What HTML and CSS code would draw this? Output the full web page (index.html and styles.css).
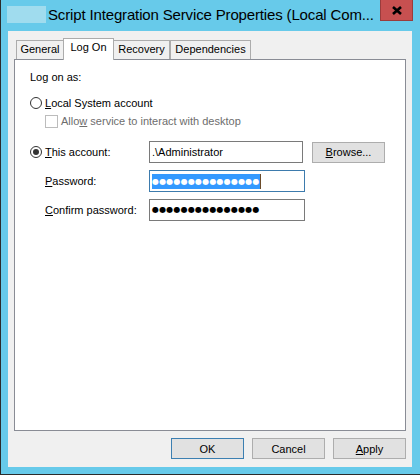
FILE: index.html
```html
<!DOCTYPE html>
<html lang="en">
<head>
    <meta charset="UTF-8">
    <title>Script Integration Service Properties</title>
    <link rel="stylesheet" href="styles.css">
</head>
<body>
    <div class="window">
        <!-- Title bar -->
        <div class="titlebar">
            <span class="app-icon"></span>
            <span class="title">Script Integration Service Properties (Local Com...</span>
            <span class="close">
                <svg width="10" height="9" viewBox="0 0 10 9">
                    <path d="M1 1 L9 8 M9 1 L1 8" stroke="#000" stroke-width="2.6" fill="none"/>
                </svg>
            </span>
        </div>

        <div class="client">
            <!-- Tabs -->
            <div class="tabs">
                <div class="tab general">General</div>
                <div class="tab active">Log On</div>
                <div class="tab recovery">Recovery</div>
                <div class="tab dependencies">Dependencies</div>
            </div>

            <!-- Log On page -->
            <div class="panel">
                <div class="logon-label">Log on as:</div>

                <div class="radio-row">
                    <span class="radio"></span>
                    <span><u>L</u>ocal System account</span>
                </div>

                <div class="check-row">
                    <span class="checkbox"></span>
                    <span>Allo<u>w</u> service to interact with desktop</span>
                </div>

                <div class="account-grid">
                    <div class="radio-row">
                        <span class="radio checked"></span>
                        <span><u>T</u>his account:</span>
                    </div>
                    <div class="field short">.\Administrator</div>
                    <button class="btn">
                        <u>B</u>rowse...
                    </button>

                    <div class="field-label"><u>P</u>assword:</div>
                    <div class="field focused">
                        <span class="selected">&#9679;&#9679;&#9679;&#9679;&#9679;&#9679;&#9679;&#9679;&#9679;&#9679;&#9679;&#9679;&#9679;&#9679;&#9679;</span><span class="caret"></span>
                    </div>
                    <div></div>

                    <div class="field-label"><u>C</u>onfirm password:</div>
                    <div class="field dots">&#9679;&#9679;&#9679;&#9679;&#9679;&#9679;&#9679;&#9679;&#9679;&#9679;&#9679;&#9679;&#9679;&#9679;&#9679;</div>
                    <div></div>
                </div>
            </div>

            <!-- Dialog buttons -->
            <div class="buttons">
                <button class="btn default">OK</button>
                <button class="btn">Cancel</button>
                <button class="btn"><u>A</u>pply</button>
            </div>
        </div>
    </div>
</body>
</html>
```

FILE: styles.css
```css
* {
    box-sizing: border-box;
}
body {
    margin: 0;
    font-family: "Liberation Sans", Arial, sans-serif;
    font-size: 11px;
    color: #000;
}
.window {
    width: 420px;
    height: 475px;
    display: flex;
    flex-direction: column;
    background: #67CAEA;
    border-left: 1px solid #2b2b2b;
    border-bottom: 1px solid #2b2b2b;
}
.titlebar {
    height: 31px;
    display: flex;
    align-items: flex-start;
    flex-shrink: 0;
}
.app-icon {
    width: 39px;
    height: 17px;
    margin: 6px 0 0 6px;
    background: #A0DCEE;
}
.title {
    margin: 6px 0 0 2px;
    font-size: 15px;
    line-height: 18px;
    letter-spacing: -0.15px;
    color: #000;
    white-space: nowrap;
}
.close {
    margin-left: auto;
    margin-right: 7px;
    width: 33px;
    height: 21px;
    background: #C75050;
    border: 1px solid #9a3c3c;
    border-top: none;
    display: flex;
    align-items: center;
    justify-content: center;
}
.client {
    flex: 1;
    margin: 0 8px 7px 7px;
    padding: 0 6px;
    background: #F0F0F0;
    display: flex;
    flex-direction: column;
}
.tabs {
    display: flex;
    align-items: flex-end;
    margin-top: 7px;
    padding-left: 2px;
    height: 21px;
}
.tab {
    height: 19px;
    line-height: 17px;
    text-align: center;
    border: 1px solid #ACACAC;
    border-bottom: none;
    background: #F0F0F0;
}
.tab.general {
    width: 48px;
}
.tab.recovery {
    width: 57px;
    margin-left: -1px;
}
.tab.dependencies {
    width: 81px;
}
.tab.active {
    position: relative;
    z-index: 1;
    width: 51px;
    height: 22px;
    line-height: 17px;
    margin: 0 0 -1px -1px;
    background: #fff;
}
.panel {
    flex: 1;
    background: #fff;
    border: 1px solid #898C95;
    padding: 10px 15px 0 15px;
}
.logon-label {
    line-height: 14px;
}
.radio-row {
    display: flex;
    align-items: center;
    height: 14px;
    line-height: 14px;
}
.panel > .radio-row {
    margin-top: 12px;
}
.radio {
    width: 12px;
    height: 12px;
    margin-right: 3px;
    border: 1px solid #333;
    border-radius: 50%;
    background: #fff;
    display: flex;
    align-items: center;
    justify-content: center;
}
.radio.checked::after {
    content: "";
    width: 6px;
    height: 6px;
    border-radius: 50%;
    background: #333;
}
.check-row {
    display: flex;
    align-items: center;
    margin: 5px 0 0 15px;
    height: 13px;
    line-height: 13px;
    color: #6D6D6D;
}
.checkbox {
    width: 13px;
    height: 13px;
    margin-right: 3px;
    border: 1px solid #BCBCBC;
    background: #fff;
}
.account-grid {
    display: grid;
    grid-template-columns: 112px 156px 73px;
    grid-auto-rows: 22px;
    column-gap: 7px;
    row-gap: 7px;
    margin-top: 13px;
    align-items: center;
}
.account-grid .radio-row {
    height: 22px;
}
.field-label {
    padding-left: 15px;
}
.field {
    height: 22px;
    border: 1px solid #7A7A7A;
    padding: 0 2px;
    line-height: 20px;
    background: #fff;
    white-space: nowrap;
}
.field.short {
    width: 154px;
}
.field.focused {
    border-color: #3D7BAD;
    display: flex;
    align-items: center;
}
.selected {
    background: #3399FF;
    color: #fff;
    font-family: "DejaVu Sans", sans-serif;
    font-size: 8px;
    letter-spacing: 0.2px;
    line-height: 15px;
}
.caret {
    width: 1px;
    height: 15px;
    background: #6b4b2a;
}
.field.dots {
    font-family: "DejaVu Sans", sans-serif;
    font-size: 8px;
    letter-spacing: 0.2px;
}
.btn {
    height: 21px;
    width: 73px;
    padding: 0;
    font-family: inherit;
    font-size: inherit;
    color: #000;
    background: #E1E1E1;
    border: 1px solid #ADADAD;
}
.btn.default {
    border-color: #3C7FB1;
}
.buttons {
    display: flex;
    justify-content: flex-end;
    gap: 8px;
    margin: 7px 0 8px;
}
```
